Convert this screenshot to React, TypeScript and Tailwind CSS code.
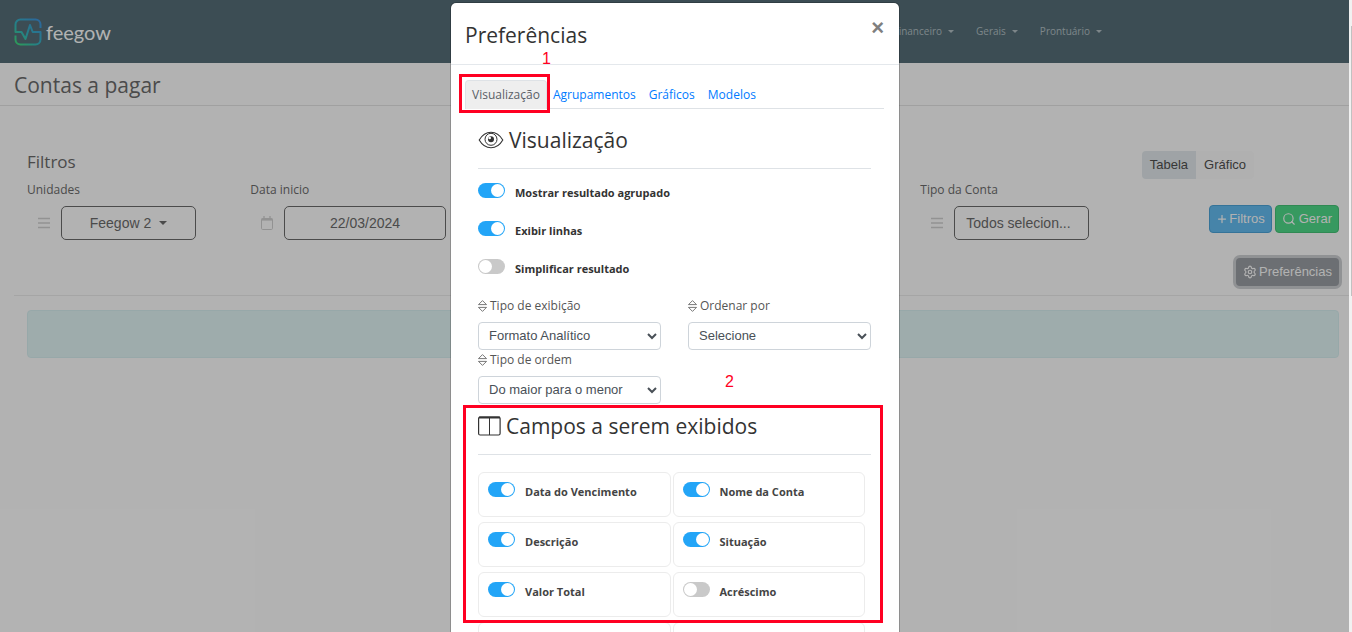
import { useState, type ReactNode } from "react";
import { Plus, Search, Settings } from "lucide-react";
import { clsx } from "clsx";

const menus = ["Financeiro", "Gerais", "Prontuário"];

const tabs = ["Visualização", "Agrupamentos", "Gráficos", "Modelos"];

const options = [
  { id: "agrupado", label: "Mostrar resultado agrupado", on: true },
  { id: "linhas", label: "Exibir linhas", on: true },
  { id: "simplificar", label: "Simplificar resultado", on: false },
];

const selects = [
  { id: "exibicao", label: "Tipo de exibição", value: "Formato Analítico" },
  { id: "ordenar", label: "Ordenar por", value: "Selecione" },
  { id: "ordem", label: "Tipo de ordem", value: "Do maior para o menor" },
];

const fields = [
  { id: "vencimento", label: "Data do Vencimento", on: true },
  { id: "conta", label: "Nome da Conta", on: true },
  { id: "descricao", label: "Descrição", on: true },
  { id: "situacao", label: "Situação", on: true },
  { id: "total", label: "Valor Total", on: true },
  { id: "acrescimo", label: "Acréscimo", on: false },
];

function Logo() {
  return (
    <a href="#" className="flex items-center gap-1">
      <svg viewBox="0 0 28 28" className="size-7" fill="none">
        <defs>
          <linearGradient id="logo" x1="2" y1="27" x2="24" y2="3" gradientUnits="userSpaceOnUse">
            <stop stopColor="#43e07a" />
            <stop offset="0.45" stopColor="#35b9c0" />
            <stop offset="1" stopColor="#3f97dd" />
          </linearGradient>
        </defs>
        <path
          d="M26.5 10V6.5a5 5 0 0 0-5-5h-15a5 5 0 0 0-5 5V14h6l4 7L16 7l2.700 7h7.800v7.500a5 5 0 0 1-5 5h-15a5 5 0 0 1-5-5V17.500"
          stroke="url(#logo)"
          strokeWidth="2"
          strokeLinejoin="round"
        />
      </svg>
      <span className="font-['Lato',sans-serif] text-xl leading-7 text-white">feegow</span>
    </a>
  );
}

function BarsIcon() {
  return (
    <svg viewBox="0 0 14 14" className="size-3.5 shrink-0 text-[#d2d2d2]" stroke="currentColor">
      <path d="M1 2.500h12M1 7h12M1 11.500h12" strokeWidth="1.300" />
    </svg>
  );
}

function CalendarIcon() {
  return (
    <svg viewBox="0 0 14 14" className="size-3.5 shrink-0 text-[#d2d2d2]" fill="none" stroke="currentColor">
      <rect x="1.500" y="2.500" width="11" height="11" rx="1.200" />
      <path d="M1.500 3.500h11" strokeWidth="2.200" />
      <path d="M4 0v3M10 0v3" strokeWidth="1.300" />
    </svg>
  );
}

function EyeIcon() {
  return (
    <svg viewBox="0 0 26 20" className="h-5 w-[26px]" fill="none" stroke="currentColor">
      <path d="M1.200 10C4 5.200 8.300 2.200 13 2.200s9 3 11.800 7.800c-2.800 4.800-7.100 7.800-11.800 7.800S4 14.800 1.200 10z" strokeWidth="1.100" />
      <circle cx="13" cy="9.300" r="6" strokeWidth="1" />
      <circle cx="13" cy="9.300" r="3" fill="currentColor" stroke="none" />
      <circle cx="11.700" cy="8" r="1.300" fill="white" stroke="none" />
    </svg>
  );
}

function ColumnsIcon() {
  return (
    <svg viewBox="0 0 23 20" className="h-5 w-[23px]" fill="none" stroke="currentColor">
      <rect x="0.600" y="1" width="21.500" height="18" rx="1.500" strokeWidth="1.200" />
      <path d="M1 1.500h21" strokeWidth="2" />
      <path d="M11.500 2v17" />
    </svg>
  );
}

function SortIcon() {
  return (
    <svg
      viewBox="0 0 9 12"
      className="h-3 w-[9px] shrink-0"
      fill="none"
      stroke="currentColor"
      strokeWidth="0.800"
      strokeLinejoin="round"
    >
      <path d="M4.500 0.600 8.500 4.600h-8zM4.500 11.400 0.500 7.400h8z" />
    </svg>
  );
}

function Toggle({ id, label, on }: { id: string; label: string; on: boolean }) {
  return (
    <div className="flex items-start">
      <input
        id={id}
        type="checkbox"
        defaultChecked={on}
        className="h-[15px] w-[27px] appearance-none rounded-full bg-[#c9c9c9] p-px before:block before:size-[13px] before:rounded-full before:bg-white checked:bg-[#23a5f7] checked:before:translate-x-3"
      />
      <label htmlFor={id} className="pl-2.5 text-[11px] leading-5 font-bold">
        {label}
      </label>
    </div>
  );
}

function SectionTitle({ icon, children }: { icon: ReactNode; children: ReactNode }) {
  return (
    <h3 className="flex items-center gap-[5px] border-b border-[#dee2e6] pb-3.5 text-[21px] leading-7">
      {icon}
      {children}
    </h3>
  );
}

function Filter({ id, label, icon, className, children }: {
  id: string;
  label: string;
  icon: ReactNode;
  className?: string;
  children: ReactNode;
}) {
  return (
    <div className={className}>
      <label htmlFor={id} className="block pt-px text-xs leading-5">
        {label}
      </label>
      <div className="mt-1.5 flex items-center pl-[10px] font-['Liberation_Sans',sans-serif] text-sm">
        {icon}
        {children}
      </div>
    </div>
  );
}

function Page() {
  return (
    <div className="min-w-0 flex-1 text-[#6c6c6c]">
      <header className="flex h-[63px] items-center bg-[#566f79] px-3.5">
        <Logo />
        <nav className="mr-[233px] ml-auto flex gap-[22px] text-[10px] text-[#b4c0c5]">
          {menus.map((m) => (
            <button key={m} type="button" className="flex items-center gap-1.5">
              {m}
              <span className="border-x-3 border-t-3 border-x-transparent border-t-current" />
            </button>
          ))}
        </nav>
      </header>
      <h1 className="border-b border-[#e6e6e6] px-3.5 pt-2 pb-1.5 text-[21px] leading-7">
        Contas a pagar
      </h1>

      <main>
        <div className="pt-[45px] pr-2.5 pl-[27px]">
          <div className="flex items-start">
            <h2 className="text-[17px] leading-[22px]">Filtros</h2>
            <div className="mr-[85px] ml-auto flex font-['Liberation_Sans',sans-serif] text-[13px] leading-7 text-[#505050]">
              <button type="button" className="rounded-l bg-[#e4eaee] px-2">Tabela</button>
              <button type="button" className="rounded-r bg-[#fdfdfd] px-2">Gráfico</button>
            </div>
          </div>
          <div className="grid grid-cols-6 gap-x-7">
            <Filter id="unidades" label="Unidades" icon={<BarsIcon />}>
              <button
                id="unidades"
                type="button"
                className="ml-2.5 flex h-[34px] w-[135px] items-center justify-center gap-2 rounded-[5px] border border-[#6c6c6c]"
              >
                Feegow 2
                <span className="border-x-4 border-t-4 border-x-transparent border-t-current" />
              </button>
            </Filter>
            <Filter id="inicio" label="Data inicio" icon={<CalendarIcon />}>
              <input
                id="inicio"
                defaultValue="22/03/2024"
                className="ml-2.5 h-[34px] w-full min-w-0 rounded-[5px] border border-[#6c6c6c] text-center"
              />
            </Filter>
            <Filter id="tipo" label="Tipo da Conta" icon={<BarsIcon />} className="col-start-5">
              <button
                id="tipo"
                type="button"
                className="ml-2.5 h-[34px] w-[135px] rounded-[5px] border border-[#6c6c6c] px-[11px] text-left"
              >
                Todos selecion...
              </button>
            </Filter>
            <div className="flex flex-wrap justify-end gap-x-[3px] gap-y-[25px] pt-[26px] font-['Liberation_Sans',sans-serif] text-[13px] text-white">
              <button type="button" className="flex h-7 items-center gap-px rounded border border-[#4da5da] bg-[#65bdf2] px-1.5">
                <Plus className="size-3" strokeWidth={2.5} /> Filtros
              </button>
              <button type="button" className="flex h-7 items-center gap-[3px] rounded border border-[#45c477] bg-[#4fdb8a] px-1.5">
                <Search className="size-3.5" strokeWidth={2} /> Gerar
              </button>
              <button type="button" className="flex h-7 items-center gap-0.5 rounded bg-[#9b9fa5] px-[7px] ring-3 ring-[#cfd1d4]">
                <Settings className="size-3.5" strokeWidth={2} /> Preferências
              </button>
            </div>
          </div>
        </div>
        <hr className="mt-[9px] ml-3.5 border-[#ececec]" />
        <div className="mt-3.5 mr-2.5 ml-[27px] h-12 rounded border border-[#d9f1f3] bg-[#e3f7f7]" />
      </main>
    </div>
  );
}

function Preferences() {
  const [tab, setTab] = useState(tabs[0]);

  return (
    <section
      role="dialog"
      aria-labelledby="preferencias"
      className="relative w-[450px] rounded-md border border-black/20 bg-white bg-clip-padding text-[#333]"
    >
      <header className="flex items-start justify-between border-b border-[#e4e8ec] py-[15px] pr-[15px] pl-3.5">
        <h2 id="preferencias" className="pt-[3px] text-[21px] leading-7">
          Preferências
        </h2>
        <button
          type="button"
          aria-label="Fechar"
          className="font-['Liberation_Sans',sans-serif] text-[22px] leading-5 font-bold text-[#7f7f7f]"
        >
          ×
        </button>
      </header>

      <div className="pt-[15px] pr-[15px] pl-3.5">
        <div role="tablist" className="flex border-b border-[#dee2e6] text-xs leading-[27px]">
          {tabs.map((t) => (
            <button
              key={t}
              type="button"
              role="tab"
              aria-selected={t === tab}
              onClick={() => setTab(t)}
              className={clsx(
                "rounded-t border border-b-0",
                t === tab
                  ? "-mb-px border-[#dee2e6] bg-[#eee] px-1.5 pb-px text-[#5a6067]"
                  : "border-transparent px-[5px] pr-1.5 text-[#007bff]",
              )}
            >
              {t}
            </button>
          ))}
        </div>

        <div className="px-[13px] pt-[17px]">
          <SectionTitle icon={<EyeIcon />}>Visualização</SectionTitle>
          <div className="mt-3.5 flex flex-col gap-[18px]">
            {options.map((o) => (
              <Toggle key={o.id} {...o} />
            ))}
          </div>

          <div className="mt-[17px] grid grid-cols-2 gap-x-[27px]">
            {selects.map((s) => (
              <div key={s.id}>
                <label
                  htmlFor={s.id}
                  className="flex items-center gap-[3px] pb-1.5 text-xs leading-5 text-[#555]"
                >
                  <SortIcon />
                  {s.label}
                </label>
                <select
                  id={s.id}
                  className="block h-7 w-full rounded border border-[#ced4da] bg-white px-1.5 pb-0.5 font-['Liberation_Sans',sans-serif] text-[13px] text-[#495057]"
                >
                  <option>{s.value}</option>
                </select>
              </div>
            ))}
          </div>

          <div className="pt-2">
            <SectionTitle icon={<ColumnsIcon />}>Campos a serem exibidos</SectionTitle>
          </div>
          <div className="mt-[17px] mr-1.5 grid grid-cols-2 gap-x-0.5 gap-y-[5px] text-[#444]">
            {fields.map((f) => (
              <div key={f.id} className="h-[45px] rounded-md border border-[#ececec] px-[9px] py-[9px]">
                <Toggle {...f} />
              </div>
            ))}
            <div className="h-[45px] rounded-md border border-[#ececec]" />
            <div className="h-[45px] rounded-md border border-[#ececec]" />
          </div>
        </div>
      </div>

      {/* Numbered callouts */}
      <div className="absolute top-[71px] left-2 h-[39px] w-[91px] border-3 border-[#ff0022]" />
      <span className="absolute top-11 left-[91px] font-['Liberation_Sans',sans-serif] text-base text-[#ff0022]">1</span>
      <span className="absolute top-[367px] left-[274px] font-['Liberation_Sans',sans-serif] text-base text-[#ff0022]">2</span>
      <div className="absolute top-[402px] left-3 h-[218px] w-[420px] border-3 border-[#ff0022]" />
    </section>
  );
}

export default function App() {
  return (
    <div className="relative flex h-screen overflow-hidden bg-white font-['Open_Sans','Noto_Sans',sans-serif]">
      <Page />
      <div className="w-[3px] bg-[#f1f1f1] pt-[26px] pl-0.5">
        <div className="h-[270px] bg-[#c1c1c1]" />
      </div>
      <div className="absolute inset-0 right-[3px] bg-black/30" />
      <div className="absolute inset-0 right-0.5 flex items-start justify-center overflow-hidden pt-0.5">
        <Preferences />
      </div>
    </div>
  );
}
